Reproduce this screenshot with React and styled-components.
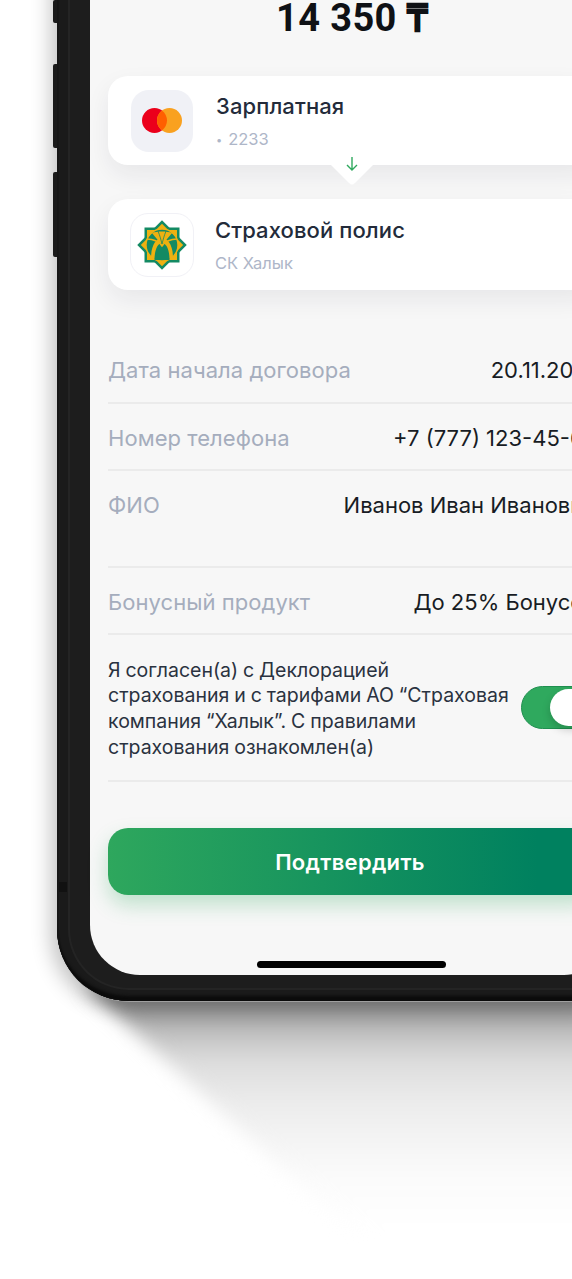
import React from 'react';
import styled, { createGlobalStyle } from 'styled-components';

const GlobalStyle = createGlobalStyle`
  html, body {
    margin: 0;
    padding: 0;
    background: #ffffff;
  }
  * {
    box-sizing: border-box;
  }
`;

const Page = styled.div`
  position: relative;
  width: 572px;
  height: 1279px;
  overflow: hidden;
  background: #ffffff;
  padding-left: 57px;
  font-family: Inter, 'Noto Sans', sans-serif;
`;

const CastShadow = styled.div`
  position: absolute;
  left: 84px;
  top: 985px;
  width: 700px;
  height: 300px;
  filter: blur(9px);
`;

const CastShadowShape = styled.div`
  width: 100%;
  height: 100%;
  background: linear-gradient(
    180deg,
    #828282 0,
    #868686 17px,
    #bdbdbd 45px,
    #dcdcdc 75px,
    #ebebeb 115px,
    #f4f4f4 155px,
    #fbfbfb 195px,
    #ffffff 245px
  );
  clip-path: polygon(0 0, 100% 0, 100% 100%, 324px 100%);
`;

const Phone = styled.div`
  position: relative;
  width: 590px;
  margin-top: -30px;
  padding: 30px 33px 26px;
  background: #1d1d1d;
  border-radius: 0 0 72px 72px;
  box-shadow:
    inset 0 -7px 3px -2px #0b0b0b,
    inset 2px 0 0 #161616,
    inset 0 0 0 11px #1a1a1a,
    inset 0 0 0 13px #242424,
    0 1px 0 #a0a0a0,
    -6px 6px 20px rgba(0, 0, 0, 0.24);
`;

const SideButton = styled.div`
  position: absolute;
  left: -4px;
  top: ${(p) => p.$top}px;
  width: 4px;
  height: ${(p) => p.$height}px;
  background: #1a1a1a;
  border-radius: 2px 0 0 2px;
`;

const AntennaBand = styled.div`
  position: absolute;
  left: 2px;
  top: 912px;
  width: 8px;
  height: 10px;
  background: #111111;
`;

const Screen = styled.div`
  position: relative;
  display: flex;
  flex-direction: column;
  height: 975px;
  padding: 0 18px;
  background: #f7f7f7;
  border-radius: 0 0 50px 50px;
`;

const Amount = styled.div`
  height: 37px;
  font-family: Roboto, sans-serif;
  font-size: 38px;
  font-weight: 700;
  line-height: 37px;
  letter-spacing: 0.4px;
  text-align: center;
  color: #0f1115;
`;

const Currency = styled.span`
  -webkit-text-stroke: 1.2px #0f1115;
`;

const CardStack = styled.div`
  display: flex;
  flex-direction: column;
  gap: 34px;
  margin-top: 39px;
`;

const Card = styled.div`
  position: relative;
  display: flex;
  align-items: center;
  gap: ${(p) => p.$gap}px;
  height: ${(p) => p.$height}px;
  padding-left: ${(p) => p.$inset}px;
  background: #ffffff;
  border-radius: 20px;
  box-shadow: 0 10px 24px rgba(30, 35, 50, 0.07);
`;

const IconBox = styled.div`
  display: flex;
  align-items: center;
  justify-content: center;
  flex: none;
  width: ${(p) => p.$size}px;
  height: ${(p) => p.$size}px;
  background: ${(p) => (p.$outlined ? '#ffffff' : '#f0f1f6')};
  border: ${(p) => (p.$outlined ? '1px solid #f1f1f6' : 'none')};
  border-radius: 18px;
`;

const CardText = styled.div`
  display: flex;
  flex-direction: column;
  gap: 9px;
  padding-top: 2px;
`;

const CardTitle = styled.div`
  font-size: 22px;
  font-weight: 450;
  line-height: 26px;
  letter-spacing: 0.1px;
  color: #232b3a;
`;

const CardSub = styled.div`
  font-size: 16.5px;
  line-height: 22px;
  color: #aeb6c8;
`;

const SubDot = styled.span`
  font-size: 11px;
  margin-right: 6px;
  vertical-align: 1px;
`;

const Notch = styled.div`
  position: absolute;
  left: 222px;
  bottom: -21px;
  display: flex;
  justify-content: center;
  width: 44px;
  height: 22px;
  color: #2fa95e;
`;

const NotchShape = styled.svg`
  position: absolute;
  inset: 0;
`;

const NotchArrow = styled.svg`
  position: relative;
  margin-top: -8px;
`;

const Rows = styled.div`
  margin-top: 46px;
`;

const Row = styled.div`
  display: flex;
  align-items: flex-start;
  justify-content: space-between;
  height: ${(p) => (p.$tall ? 96.5 : 67.5)}px;
  padding-top: 21px;
  border-bottom: 2px solid #ebebeb;
  font-size: 22px;
  line-height: 26px;
`;

const RowLabel = styled.div`
  color: #a5adbd;
  letter-spacing: 0.05px;
`;

const RowValue = styled.div`
  color: #181c24;
  white-space: nowrap;
`;

const AgreementRow = styled.div`
  display: flex;
  align-items: center;
  justify-content: space-between;
  height: 147px;
  border-bottom: 2px solid #ebebeb;
`;

const AgreementText = styled.div`
  width: 405px;
  padding-top: 3px;
  font-size: 19.5px;
  line-height: 25.6px;
  word-spacing: -0.6px;
  color: #2a3240;
`;

const Toggle = styled.div`
  display: flex;
  justify-content: flex-end;
  flex: none;
  width: 75px;
  height: 43px;
  padding: 2px;
  background: #2fa95e;
  border: 1px solid #1f8f4f;
  border-radius: 22px;
`;

const ToggleKnob = styled.div`
  width: 43px;
  height: 37px;
  background: #ffffff;
  border-radius: 19px;
  box-shadow: 0 4px 8px rgba(0, 0, 0, 0.18);
`;

const ConfirmButton = styled.button`
  flex: none;
  width: 100%;
  height: 67px;
  margin-top: 46px;
  padding: 0 4px 0 0;
  background: linear-gradient(90deg, #2ea75d 0%, #00815f 88%);
  border: none;
  border-radius: 20px;
  box-shadow: 0 10px 20px rgba(48, 169, 94, 0.28);
  font-family: Inter, sans-serif;
  font-size: 22px;
  font-weight: 600;
  letter-spacing: 0.3px;
  color: #ffffff;
`;

const HomeBar = styled.div`
  flex: none;
  align-self: center;
  width: 189px;
  height: 7px;
  margin: 66px 1px 0 0;
  background: #000000;
  border-radius: 4px;
`;

function MastercardIcon() {
  return (
    <svg width="40" height="25" viewBox="0 0 40 25">
      <circle cx="12.5" cy="12.5" r="12.5" fill="#eb001b" />
      <circle cx="27.5" cy="12.5" r="12.5" fill="#f9a11f" />
      <path d="M20 2.5a12.5 12.5 0 0 1 0 20a12.5 12.5 0 0 1 0-20z" fill="#ff5f00" />
    </svg>
  );
}

function HalykIcon() {
  return (
    <svg width="52" height="52" viewBox="0 0 52 52">
      <rect x="8.5" y="8.5" width="35" height="35" fill="#138a63" />
      <rect x="8.5" y="8.5" width="35" height="35" fill="#138a63" transform="rotate(45 26 26)" />
      <rect x="11" y="11" width="30" height="30" fill="#eeb111" />
      <rect x="11" y="11" width="30" height="30" fill="#eeb111" transform="rotate(45 26 26)" />
      <circle cx="26" cy="26" r="16" fill="#138a63" />
      <circle cx="26" cy="26" r="16" fill="none" stroke="#eeb111" strokeWidth="1.4" />
      <path d="M15 39C15 25 21 19 26 19C31 19 37 25 37 39Z" fill="#eeb111" />
      <path d="M18.5 41C18.5 30 22 24 26 24C30 24 33.5 30 33.5 41Z" fill="#138a63" />
      <path d="M11 20C18 20 23 23 26 27C29 23 34 20 41 20" fill="none" stroke="#eeb111" strokeWidth="1.6" />
      <path d="M16 14C20 19 23 22 26 27C29 22 32 19 36 14C32 12 20 12 16 14Z" fill="#eeb111" />
      <path d="M22 12C24 17 25 21 26 25M30 12C28 17 27 21 26 25" fill="none" stroke="#138a63" strokeWidth="0.8" />
    </svg>
  );
}

const rows = [
  { label: 'Дата начала договора', value: '20.11.2019' },
  { label: 'Номер телефона', value: '+7 (777) 123-45-67' },
  { label: 'ФИО', value: 'Иванов Иван Иванович', tall: true },
  { label: 'Бонусный продукт', value: 'До 25% Бонусов' },
];

export default function App() {
  return (
    <Page>
      <GlobalStyle />
      <CastShadow>
        <CastShadowShape />
      </CastShadow>
      <Phone>
        <SideButton $top={30} $height={23} />
        <SideButton $top={94} $height={84} />
        <SideButton $top={202} $height={85} />
        <AntennaBand />
        <Screen>
          <Amount>
            14 350 <Currency>₸</Currency>
          </Amount>
          <CardStack>
            <Card $height={89} $inset={23} $gap={23}>
              <IconBox $size={62}>
                <MastercardIcon />
              </IconBox>
              <CardText>
                <CardTitle>Зарплатная</CardTitle>
                <CardSub>
                  <SubDot>•</SubDot>2233
                </CardSub>
              </CardText>
              <Notch>
                <NotchShape width="44" height="22" viewBox="0 0 44 22">
                  <path d="M0 0H44L25 19Q22 22 19 19Z" fill="#ffffff" />
                </NotchShape>
                <NotchArrow width="14" height="16" viewBox="0 0 14 16">
                  <path d="M7 1V14M2 9l5 5 5-5" fill="none" stroke="currentColor" strokeWidth="1.4" />
                </NotchArrow>
              </Notch>
            </Card>
            <Card $height={91} $inset={22} $gap={21}>
              <IconBox $size={64} $outlined>
                <HalykIcon />
              </IconBox>
              <CardText>
                <CardTitle>Страховой полис</CardTitle>
                <CardSub>СК Халык</CardSub>
              </CardText>
            </Card>
          </CardStack>
          <Rows>
            {rows.map((row) => (
              <Row key={row.label} $tall={row.tall}>
                <RowLabel>{row.label}</RowLabel>
                <RowValue>{row.value}</RowValue>
              </Row>
            ))}
            <AgreementRow>
              <AgreementText>
                Я согласен(а) с Деклорацией страхования и с тарифами АО “Страховая компания “Халык”. С правилами
                страхования ознакомлен(а)
              </AgreementText>
              <Toggle>
                <ToggleKnob />
              </Toggle>
            </AgreementRow>
          </Rows>
          <ConfirmButton>Подтвердить</ConfirmButton>
          <HomeBar />
        </Screen>
      </Phone>
    </Page>
  );
}
